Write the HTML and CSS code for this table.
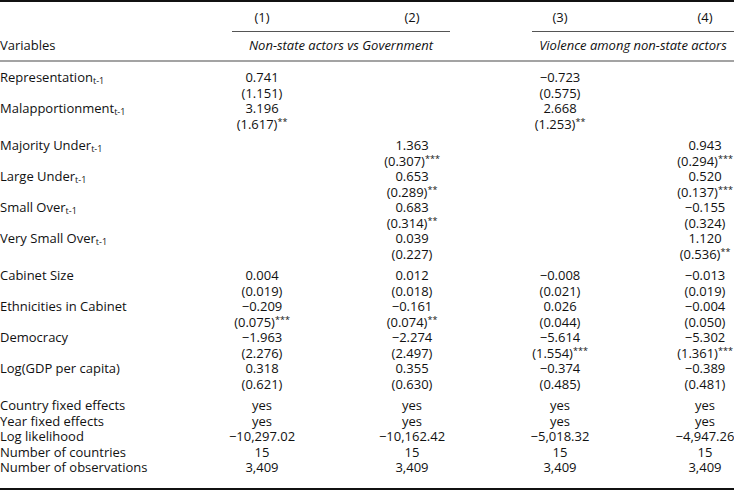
FILE: index.html
```html
<!DOCTYPE html>
<html>
<head>
<meta charset="utf-8">
<link rel="stylesheet" href="styles.css">
</head>
<body>
<div class="table">
  <div class="row head1">
    <span class="c1">(1)</span><span class="c2">(2)</span><span class="c3">(3)</span><span class="c4">(4)</span>
  </div>
  <div class="row rules">
    <span class="r12"></span><span class="r34"></span>
  </div>
  <div class="row head2">
    <span class="lab">Variables</span>
    <span class="h12">Non-state actors vs Government</span>
    <span class="h34">Violence among non-state actors</span>
  </div>
  <div class="body">
    <div class="group first">
      <div class="row"><span class="lab">Representation<sub>t-1</sub></span><span class="c1">0.741</span><span class="c3">−0.723</span></div>
      <div class="row"><span class="c1">(1.151)</span><span class="c3">(0.575)</span></div>
      <div class="row"><span class="lab">Malapportionment<sub>t-1</sub></span><span class="c1">3.196</span><span class="c3">2.668</span></div>
      <div class="row"><span class="c1">(1.617)<sup>**</sup></span><span class="c3">(1.253)<sup>**</sup></span></div>
    </div>
    <div class="group">
      <div class="row"><span class="lab">Majority Under<sub>t-1</sub></span><span class="c2">1.363</span><span class="c4">0.943</span></div>
      <div class="row"><span class="c2">(0.307)<sup>***</sup></span><span class="c4">(0.294)<sup>***</sup></span></div>
      <div class="row"><span class="lab">Large Under<sub>t-1</sub></span><span class="c2">0.653</span><span class="c4">0.520</span></div>
      <div class="row"><span class="c2">(0.289)<sup>**</sup></span><span class="c4">(0.137)<sup>***</sup></span></div>
      <div class="row"><span class="lab">Small Over<sub>t-1</sub></span><span class="c2">0.683</span><span class="c4">−0.155</span></div>
      <div class="row"><span class="c2">(0.314)<sup>**</sup></span><span class="c4">(0.324)</span></div>
      <div class="row"><span class="lab">Very Small Over<sub>t-1</sub></span><span class="c2">0.039</span><span class="c4">1.120</span></div>
      <div class="row"><span class="c2">(0.227)</span><span class="c4">(0.536)<sup>**</sup></span></div>
    </div>
    <div class="group">
      <div class="row"><span class="lab">Cabinet Size</span><span class="c1">0.004</span><span class="c2">0.012</span><span class="c3">−0.008</span><span class="c4">−0.013</span></div>
      <div class="row"><span class="c1">(0.019)</span><span class="c2">(0.018)</span><span class="c3">(0.021)</span><span class="c4">(0.019)</span></div>
      <div class="row"><span class="lab">Ethnicities in Cabinet</span><span class="c1">−0.209</span><span class="c2">−0.161</span><span class="c3">0.026</span><span class="c4">−0.004</span></div>
      <div class="row"><span class="c1">(0.075)<sup>***</sup></span><span class="c2">(0.074)<sup>**</sup></span><span class="c3">(0.044)</span><span class="c4">(0.050)</span></div>
      <div class="row"><span class="lab">Democracy</span><span class="c1">−1.963</span><span class="c2">−2.274</span><span class="c3">−5.614</span><span class="c4">−5.302</span></div>
      <div class="row"><span class="c1">(2.276)</span><span class="c2">(2.497)</span><span class="c3">(1.554)<sup>***</sup></span><span class="c4">(1.361)<sup>***</sup></span></div>
      <div class="row"><span class="lab">Log(GDP per capita)</span><span class="c1">0.318</span><span class="c2">0.355</span><span class="c3">−0.374</span><span class="c4">−0.389</span></div>
      <div class="row"><span class="c1">(0.621)</span><span class="c2">(0.630)</span><span class="c3">(0.485)</span><span class="c4">(0.481)</span></div>
    </div>
    <div class="group last">
      <div class="row"><span class="lab">Country fixed effects</span><span class="c1">yes</span><span class="c2">yes</span><span class="c3">yes</span><span class="c4">yes</span></div>
      <div class="row"><span class="lab">Year fixed effects</span><span class="c1">yes</span><span class="c2">yes</span><span class="c3">yes</span><span class="c4">yes</span></div>
      <div class="row"><span class="lab">Log likelihood</span><span class="c1">−10,297.02</span><span class="c2">−10,162.42</span><span class="c3">−5,018.32</span><span class="c4">−4,947.26</span></div>
      <div class="row"><span class="lab">Number of countries</span><span class="c1">15</span><span class="c2">15</span><span class="c3">15</span><span class="c4">15</span></div>
      <div class="row"><span class="lab">Number of observations</span><span class="c1">3,409</span><span class="c2">3,409</span><span class="c3">3,409</span><span class="c4">3,409</span></div>
    </div>
  </div>
</div>
</body>
</html>
```
FILE: styles.css
```css
html, body {
  margin: 0;
  padding: 0;
  background: #fff;
}
body {
  font-family: "Open Sans", "Noto Sans", sans-serif;
  font-size: 13px;
  color: #111;
}
.table {
  width: 734px;
  border-top: 2px solid #111;
  border-bottom: 2px solid #111;
}
.row {
  display: grid;
  grid-template-columns: 232px 60px 82px 76px 82px 56px 88px 58px;
  line-height: 15.5px;
  height: 15.5px;
  white-space: nowrap;
}
.lab { grid-column: 1; justify-self: start; }
.c1 { grid-column: 2; justify-self: center; }
.c2 { grid-column: 4; justify-self: center; }
.c3 { grid-column: 6; justify-self: center; }
.c4 { grid-column: 8; justify-self: center; }
.head1 { margin-top: 8px; }
.rules { height: 1px; margin-top: 5px; }
.r12 { grid-column: 2 / 5; border-top: 1px solid #555; }
.r34 { grid-column: 6 / 9; border-top: 1px solid #555; }
.head2 {
  margin-top: 6px;
  padding-bottom: 7px;
  border-bottom: 2px solid #a3a3a3;
  height: auto;
}
.h12 { grid-column: 2 / 5; justify-self: center; font-style: italic; }
.h34 { grid-column: 6 / 9; justify-self: center; font-style: italic; }
.body { padding: 8px 0 12px; }
.group + .group { margin-top: 6px; }
sub {
  font-size: 9px;
  line-height: 0;
  vertical-align: -2px;
}
sup {
  font-size: 9px;
  line-height: 0;
  vertical-align: 4px;
}
```
